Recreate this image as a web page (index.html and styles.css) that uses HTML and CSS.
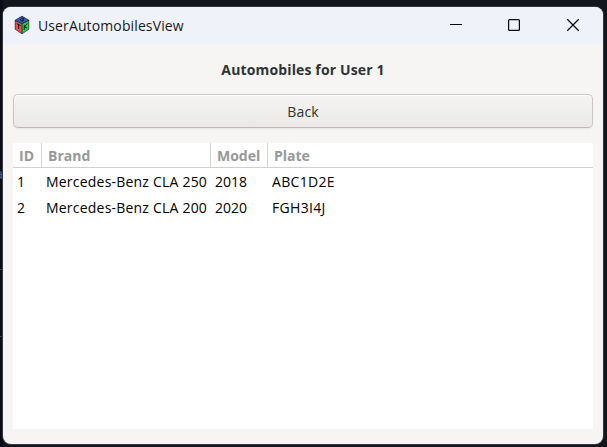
FILE: index.html
```html
<!DOCTYPE html>
<html lang="en">
<head>
<meta charset="utf-8">
<title>UserAutomobilesView</title>
<link rel="stylesheet" href="styles.css">
</head>
<body>
<div class="backdrop"><span class="behind-text">a</span><i class="tick tick-one"></i><i class="tick tick-two"></i></div>
<main class="window">
  <header class="titlebar">
    <svg class="logo" width="16" height="20" viewBox="0 0 16 20">
      <path d="M8 .8L15.2 5V14.2L8 19.2L.8 14.2V5Z" fill="#252b34"/>
      <path d="M8 1.5L14.2 5L8 8.3L1.8 5Z" fill="#2d63bd"/>
      <path d="M1.5 6L7.5 9.1V18.2L1.5 14Z" fill="#f04d56"/>
      <path d="M14.5 6L8.5 9.1V18.2L14.5 14Z" fill="#22d943"/>
      <path d="M10.3 3.6C8 2.6 5.5 4 6.5 5.3C7.8 6.4 9.8 5.9 9.8 5H8M2.7 8.6L6.5 10.5M4.6 9.5V14M10.2 9.8V15M13.2 8.5L10.5 12L13.2 13" fill="none" stroke="#11151b" stroke-width="1"/>
    </svg>
    <span class="title">UserAutomobilesView</span>
    <svg class="controls" width="130" height="14" viewBox="0 0 130 14" fill="none" stroke="#080a0d">
      <path d="M0 6.5H12" stroke-width="1"/>
      <rect x="58.6" y="1.6" width="10.8" height="10.8" rx="1" stroke-width="1.25"/>
      <path d="M117.3 1.3L128.7 12.7M128.7 1.3L117.3 12.7" stroke-width="1.25"/>
    </svg>
  </header>
  <section class="content">
    <h1 class="heading">Automobiles for User 1</h1>
    <button class="back"><span>Back</span></button>
    <div class="list">
      <div class="row head"><span><b>ID</b></span><span><b>Brand</b></span><span><b>Model</b></span><span><b>Plate</b></span></div>
      <div class="row"><span>1</span><span class="brand">Mercedes-Benz CLA 250</span><span>2018</span><span class="plate">ABC1D2E</span></div>
      <div class="row"><span>2</span><span class="brand">Mercedes-Benz CLA 200</span><span>2020</span><span class="plate">FGH3I4J</span></div>
    </div>
  </section>
</main>
</body>
</html>
```
FILE: styles.css
```css
* { box-sizing: border-box; }
body {
  margin: 0;
  width: 607px;
  height: 447px;
  padding: 7px 4px 3px 3px;
  overflow: hidden;
  background: #14161d;
  font-family: "Open Sans", "Noto Sans", sans-serif;
  font-size: 14px;
}
.backdrop { position: absolute; left: 0; top: 0; width: 3px; height: 447px; overflow: hidden; background: #0a0b17; }
.behind-text { position: absolute; left: -5px; top: 164px; color: #58658c; line-height: 20px; }
.tick { position: absolute; left: 0; width: 3px; height: 1px; background: #3a3d4c; }
.tick-one { top: 269px; }
.tick-two { top: 336px; }
.window {
  position: relative;
  width: 600px;
  height: 437px;
  overflow: hidden;
  border-radius: 8px;
  background: #f6f5f4;
  box-shadow: 0 0 0 1px #37383e;
}
.titlebar { display: flex; height: 37px; padding: 0 23px 0 11px; background: #eff3f9; }
.logo { margin-top: 8px; }
.title { margin-left: 8px; line-height: 37px; color: #16181b; letter-spacing: 0.12px; }
.controls { margin: 11px 0 0 auto; }
.content { padding: 0 10px; }
.heading {
  margin: 0;
  height: 50px;
  padding-top: 15px;
  font-size: 14px;
  line-height: 22px;
  letter-spacing: 0.14px;
  text-align: center;
  color: #2e3436;
}
.back {
  display: block;
  width: 580px;
  height: 34px;
  margin: 0 0 15px;
  padding: 0;
  border: 1px solid #cdc7c2;
  border-bottom-color: #bfb8b1;
  border-radius: 5px;
  background: linear-gradient(#f5f4f3, #eae9e7);
  box-shadow: inset 0 1px #fff, 0 1px 2px rgba(0, 0, 0, .07);
  font: inherit;
  letter-spacing: 0.2px;
  line-height: 33px;
  color: #2e3436;
}
.list { height: 286px; background: #fff; color: #000; }
.row {
  display: grid;
  grid-template-columns: 29px 169px 57px 1fr;
  height: 26px;
  line-height: 26px;
  white-space: nowrap;
}
.row span { padding-left: 4px; }
.row .brand { letter-spacing: 0.21px; }
.row .plate { letter-spacing: 0.32px; }
.row.head {
  height: 25px;
  margin-bottom: 1px;
  border-bottom: 1px solid #d2d0ce;
  line-height: 25px;
  color: #96999a;
}
.row.head span { padding-left: 6px; border-right: 1px solid #d5d2cf; }
.row.head span:last-child { border-right: 0; }
```
